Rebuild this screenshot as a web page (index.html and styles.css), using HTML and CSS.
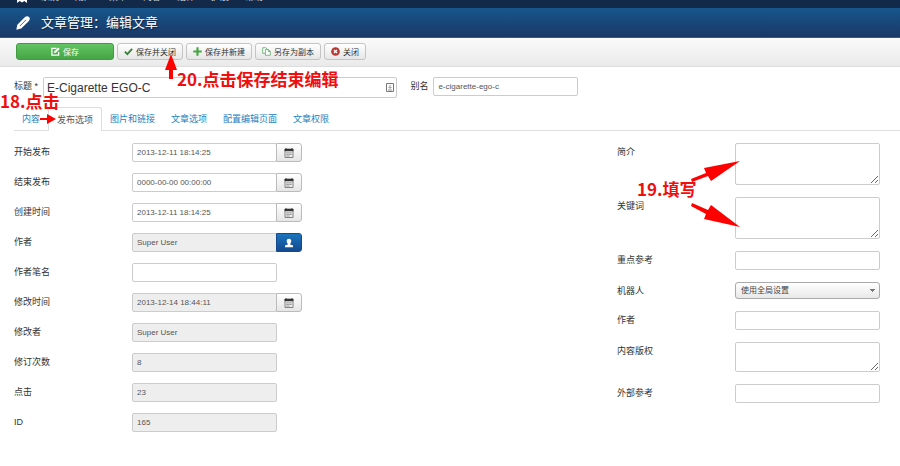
FILE: index.html
```
<!DOCTYPE html>
<html lang="zh-CN">
<head>
  <meta charset="UTF-8">
  <meta name="viewport" content="width=device-width, initial-scale=1.0">
  <title>文章管理：编辑文章</title>
  <link rel="stylesheet" href="styles.css">
</head>
<body>

  <!-- shared icons -->
  <svg class="sprite" aria-hidden="true">
    <symbol id="calendar" viewBox="0 0 10 10">
      <path d="M1 1h8v8.5H1z" fill="#eee" stroke="#666" stroke-width=".8"/>
      <path d="M.6 1h8.8v2.2H.6z" fill="#333"/>
      <path d="M2 .2v1.5M8 .2v1.5" stroke="#333"/>
      <path d="M2.5 4.8h5.2M2.5 6.4h5.2M2.5 8h3" stroke="#666" stroke-width=".9" stroke-dasharray="1.2 .7"/>
    </symbol>
  </svg>

  <nav class="navbar">
    <svg class="brand" viewBox="0 0 12 12" aria-hidden="true">
      <path d="M1 12V1h10v11L8.300 10 6 11.500 3.700 10z" fill="#fff"/>
    </svg>
    <a href="#">系统</a>
    <a href="#">用户</a>
    <a href="#">菜单</a>
    <a href="#">内容</a>
    <a href="#">组件</a>
    <a href="#">扩展</a>
    <a href="#">帮助</a>
  </nav>

  <header class="header">
    <svg class="pencil" viewBox="0 0 14 14" aria-hidden="true">
      <path d="M.3 13.700 1.300 8.800 9 1Q11.300-.6 13 1T12.900 5L5.200 12.500z" fill="#fff"/>
      <path d="M3.800 10.100 10 3.900" stroke="#4a6f98" stroke-width="1"/>
    </svg>
    <h1>文章管理：编辑文章</h1>
  </header>

  <div class="toolbar">
    <button class="btn btn-save">
      <svg viewBox="0 0 10 10" aria-hidden="true"><path d="M6 1.500H1v7.500h7.500V5.500" fill="none" stroke="#fff" stroke-width="1.400"/><path d="M3.300 6.700l.5-2L8 .5l1.600 1.600-4.200 4.200z" fill="#fff"/></svg>
      保存
    </button>
    <button class="btn">
      <svg viewBox="0 0 10 10" aria-hidden="true"><path d="M1 5.200l2.700 2.700L9 2" fill="none" stroke="#378137" stroke-width="2"/></svg>
      保存并关闭
    </button>
    <button class="btn">
      <svg viewBox="0 0 10 10" aria-hidden="true"><path d="M5 .3v9.400M.3 5h9.400" stroke="#46a546" stroke-width="2.400"/></svg>
      保存并新建
    </button>
    <button class="btn">
      <svg viewBox="0 0 10 10" aria-hidden="true"><path d="M3.500 7H.8V.8h3.400l1.500 1.500M3.800 2.800h3.400l2 2v4.400H3.800zM7 2.800v2.200h2.200" fill="#fff" stroke="#5cab6c" stroke-width=".9"/></svg>
      另存为副本
    </button>
    <button class="btn">
      <svg viewBox="0 0 10 10" aria-hidden="true"><circle cx="5" cy="5" r="4.800" fill="#bd362f"/><path d="M3.300 3.300l3.400 3.400M6.700 3.300L3.300 6.700" stroke="#fff" stroke-width="1.500"/></svg>
      关闭
    </button>
  </div>

  <form class="edit-form">
    <div class="title-row">
      <label for="title">标题 *</label>
      <div class="title-box">
        <input type="text" id="title" value="E-Cigarette EGO-C">
        <svg viewBox="0 0 8 9" aria-hidden="true"><path d="M.5.5h7v8h-7z" fill="#fff" stroke="#777"/><path d="M4 2v3M2.500 4 4 5.500 5.500 4M2 7h4" fill="none" stroke="#777" stroke-width=".8"/></svg>
      </div>
      <label for="alias">别名</label>
      <input type="text" id="alias" class="alias" value="e-cigarette-ego-c">
    </div>

    <ul class="tabs">
      <li><a href="#">内容</a></li>
      <li class="active"><a href="#">发布选项</a></li>
      <li><a href="#">图片和链接</a></li>
      <li><a href="#">文章选项</a></li>
      <li><a href="#">配置编辑页面</a></li>
      <li><a href="#">文章权限</a></li>
    </ul>

    <div class="columns">
      <div class="column publishing">
        <div class="field">
          <label for="publish-up">开始发布</label>
          <input type="text" id="publish-up" value="2013-12-11 18:14:25">
          <button type="button" class="addon" aria-label="日历"><svg><use href="#calendar"/></svg></button>
        </div>
        <div class="field">
          <label for="publish-down">结束发布</label>
          <input type="text" id="publish-down" value="0000-00-00 00:00:00">
          <button type="button" class="addon" aria-label="日历"><svg><use href="#calendar"/></svg></button>
        </div>
        <div class="field">
          <label for="created">创建时间</label>
          <input type="text" id="created" value="2013-12-11 18:14:25">
          <button type="button" class="addon" aria-label="日历"><svg><use href="#calendar"/></svg></button>
        </div>
        <div class="field">
          <label for="author">作者</label>
          <input type="text" id="author" value="Super User" readonly>
          <button type="button" class="addon addon-user" aria-label="选择用户">
            <svg viewBox="0 0 10 10"><path d="M5 .8c3 0 2.600 3.700 1.200 5v.8L9 7.600v1.600H1V7.600l2.800-1v-.8C2.400 4.500 2 .8 5 .8z" fill="#fff"/></svg>
          </button>
        </div>
        <div class="field">
          <label for="author-alias">作者笔名</label>
          <input type="text" id="author-alias">
        </div>
        <div class="field">
          <label for="modified">修改时间</label>
          <input type="text" id="modified" value="2013-12-14 18:44:11" readonly>
          <button type="button" class="addon" aria-label="日历"><svg><use href="#calendar"/></svg></button>
        </div>
        <div class="field">
          <label for="modified-by">修改者</label>
          <input type="text" id="modified-by" value="Super User" readonly>
        </div>
        <div class="field">
          <label for="revision">修订次数</label>
          <input type="text" id="revision" value="8" readonly>
        </div>
        <div class="field">
          <label for="hits">点击</label>
          <input type="text" id="hits" value="23" readonly>
        </div>
        <div class="field">
          <label for="id">ID</label>
          <input type="text" id="id" value="165" readonly>
        </div>
      </div>

      <div class="column metadata">
        <div class="field">
          <label for="metadesc">简介</label>
          <textarea id="metadesc"></textarea>
        </div>
        <div class="field">
          <label for="metakey">关键词</label>
          <textarea id="metakey"></textarea>
        </div>
        <div class="field">
          <label for="xreference">重点参考</label>
          <input type="text" id="xreference">
        </div>
        <div class="field">
          <label for="robots">机器人</label>
          <select id="robots">
            <option>使用全局设置</option>
          </select>
        </div>
        <div class="field">
          <label for="meta-author">作者</label>
          <input type="text" id="meta-author">
        </div>
        <div class="field">
          <label for="rights">内容版权</label>
          <textarea id="rights" class="short"></textarea>
        </div>
        <div class="field">
          <label for="external">外部参考</label>
          <input type="text" id="external">
        </div>

        <!-- step 19 -->
        <div class="note note-fill">19.填写</div>
        <svg class="arrows-fill" viewBox="0 0 50 70" aria-hidden="true">
          <path d="M0 18 15 12 13 7 49 0 20 20 17 15 1 21zM1 42 17 49 20 44 49 66 13 58 15 53 0 45z"/>
        </svg>
      </div>
    </div>
  </form>

  <!-- steps 18 and 20 -->
  <div class="note note-click">18.点击</div>
  <svg class="arrow-click" viewBox="0 0 16 10" aria-hidden="true"><path d="M0 4h7V0l9 5-9 5V6H0z"/></svg>
  <div class="note note-save">20.点击保存结束编辑</div>
  <svg class="arrow-save" viewBox="0 0 12 25" aria-hidden="true"><path d="M6 0l6 16H8v9H4v-9H0z"/></svg>

</body>
</html>
```
FILE: styles.css
```
* {
  box-sizing: border-box;
}

body {
  margin: 0;
  position: relative;
  background: #fff;
  color: #333;
  font-family: "Liberation Sans", "Noto Sans CJK SC", sans-serif;
  font-size: 9px;
  line-height: 12px;
}

a {
  color: #1b83c2;
  text-decoration: none;
}

input,
textarea,
select,
button {
  margin: 0;
  font-family: inherit;
  font-size: 8px;
  color: #555;
}

.sprite {
  position: absolute;
  width: 0;
  height: 0;
}

/* top bars */
.navbar {
  display: flex;
  align-items: center;
  gap: 16px;
  height: 20px;
  margin-top: -12px;
  padding: 0 16px 2px;
  background: #13294a;
}

.navbar a {
  color: #ccd3de;
}

.brand {
  width: 12px;
  height: 12px;
  margin-right: -3px;
}

.header {
  display: flex;
  align-items: center;
  gap: 11px;
  height: 30px;
  padding: 0 16px;
  background: linear-gradient(#17568c, #1a3867);
  border-bottom: 1px solid #3c5a80;
}

.header h1 {
  margin: 0;
  font-size: 13px;
  font-weight: normal;
  line-height: 20px;
  color: #fff;
  text-shadow: 1px 1px 1px #0c2340;
}

.pencil {
  width: 14px;
  height: 14px;
}

/* toolbar */
.toolbar {
  display: flex;
  gap: 3px;
  padding: 5px 16px 6px;
  background: linear-gradient(#fafafa, #eaeaea);
  border-bottom: 1px solid #ddd;
}

.btn {
  display: flex;
  align-items: center;
  justify-content: center;
  gap: 3px;
  height: 17px;
  padding: 0 6px;
  color: #333;
  background: linear-gradient(#fff, #e6e6e6);
  border: 1px solid #c4c4c4;
  border-radius: 3px;
  cursor: pointer;
}

.btn svg {
  width: 9px;
  height: 9px;
}

.btn-save {
  width: 98px;
  color: #fff;
  background: linear-gradient(#62c462, #46a546);
  border-color: #429a42;
}

/* form */
.edit-form {
  padding: 10px 0 0 14px;
}

input[type="text"],
textarea,
select {
  width: 145px;
  height: 19px;
  padding: 0 4px;
  background: #fff;
  border: 1px solid #ccc;
  border-radius: 2px;
}

input[readonly] {
  background: #eee;
}

.title-row {
  display: flex;
  align-items: flex-start;
  gap: 5px;
}

.title-row label {
  padding-top: 3px;
}

.title-box {
  display: flex;
  align-items: center;
  width: 40%;
  margin-right: 8px;
  padding-right: 2px;
  border: 1px solid #ccc;
  border-radius: 2px;
}

.title-box input[type="text"] {
  flex: 1;
  min-width: 0;
  padding: 0 3px;
  border: 0;
  font-size: 12px;
  color: #333;
}

.title-box svg {
  width: 8px;
  height: 9px;
}

.tabs {
  display: flex;
  margin: 9px 0 0;
  padding: 0;
  list-style: none;
  border-bottom: 1px solid #ddd;
}

.tabs a {
  display: block;
  padding: 6px 8px 5px;
}

.tabs .active {
  margin-bottom: -1px;
  background: #fff;
  border: 1px solid #ddd;
  border-bottom: 0;
  border-radius: 3px 3px 0 0;
}

.active a {
  color: #555;
}

.columns {
  display: flex;
  justify-content: space-between;
  padding: 12px 20px 12px 0;
}

.column {
  position: relative;
  display: flex;
  flex-direction: column;
}

.publishing {
  gap: 11px;
}

.metadata {
  gap: 12px;
}

.field {
  display: flex;
  align-items: flex-start;
}

.field label {
  width: 118px;
  padding-top: 3px;
}

.field textarea {
  display: block;
  height: 42px;
}

.field textarea.short {
  height: 30px;
}

.field select {
  height: 17px;
  appearance: none;
  padding: 0 5px;
  color: #444;
  background:
    linear-gradient(#777, #777) right 4px top 6px / 5px 1px no-repeat,
    linear-gradient(#777, #777) right 5px top 7px / 3px 1px no-repeat,
    linear-gradient(#777, #777) right 6px top 8px / 1px 1px no-repeat,
    linear-gradient(#fff, #e8e8e8);
  border-color: #aaa;
  border-radius: 3px;
}

.addon {
  display: flex;
  align-items: center;
  justify-content: center;
  width: 26px;
  height: 19px;
  margin-left: -1px;
  padding: 0;
  background: linear-gradient(#fff, #e6e6e6);
  border: 1px solid #bbb;
  border-radius: 0 3px 3px 0;
}

.addon svg {
  width: 10px;
  height: 10px;
}

.addon-user {
  background: linear-gradient(#1a75bd, #15498f);
  border-color: #15498f;
}

/* red tutorial notes over the form */
.note {
  position: absolute;
  font-size: 17px;
  font-weight: bold;
  font-family: "Noto Sans CJK SC", sans-serif;
  line-height: 14px;
  color: #f00f0f;
  white-space: nowrap;
}

.note-click {
  left: 0;
  top: 94px;
}

.note-save {
  left: 177px;
  top: 72px;
}

.note-fill {
  left: 20px;
  top: 39px;
}

.arrow-click,
.arrow-save,
.arrows-fill {
  position: absolute;
  fill: #f00;
}

.arrow-click {
  left: 40px;
  top: 114px;
  width: 16px;
  height: 10px;
}

.arrow-save {
  left: 165px;
  top: 54px;
  width: 12px;
  height: 25px;
}

.arrows-fill {
  left: 74px;
  top: 18px;
  width: 50px;
  height: 70px;
}
```
